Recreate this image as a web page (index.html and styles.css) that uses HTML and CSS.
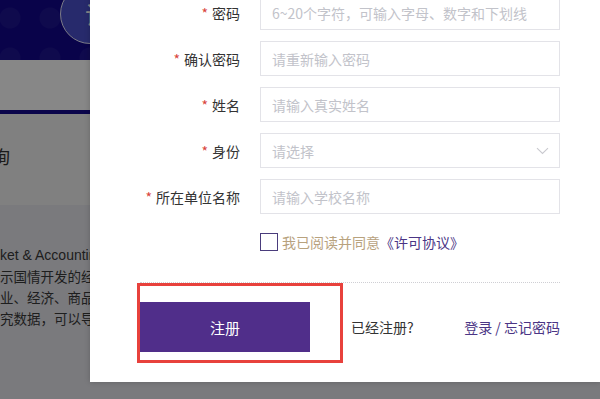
FILE: index.html
```html
<!DOCTYPE html>
<html lang="zh-CN">
<head>
<meta charset="utf-8">
<title>注册</title>
<link rel="stylesheet" href="styles.css">
</head>
<body>
<div class="page">
  <header class="hero">
    <div class="hero-btn">试</div>
  </header>
  <div class="band"></div>
  <div class="navline"></div>
  <section class="title-row"><h2 class="title">数据查询</h2></section>
  <section class="intro">
    <p class="line">ket &amp; Accounting Research Database</p>
    <p class="line">示国情开发的经济金融研究数据库</p>
    <p class="line">业、经济、商品、市场等领域的研究</p>
    <p class="line">究数据，可以导出下载使用</p>
  </section>
</div>
<div class="mask"></div>
<div class="modal">
  <form class="form">
    <div class="row">
      <label class="label"><span class="req">*</span>密码</label>
      <input class="field" type="password" placeholder="6~20个字符，可输入字母、数字和下划线">
    </div>
    <div class="row">
      <label class="label"><span class="req">*</span>确认密码</label>
      <input class="field" type="password" placeholder="请重新输入密码">
    </div>
    <div class="row">
      <label class="label"><span class="req">*</span>姓名</label>
      <input class="field" type="text" placeholder="请输入真实姓名">
    </div>
    <div class="row">
      <label class="label"><span class="req">*</span>身份</label>
      <div class="field select">
        <span class="ph">请选择</span>
        <svg class="chev" width="13" height="8" viewBox="0 0 13 8"><path d="M1 1.2 L6.5 6.5 L12 1.2" fill="none" stroke="#c9c9cf" stroke-width="1.1"/></svg>
      </div>
    </div>
    <div class="row">
      <label class="label"><span class="req">*</span>所在单位名称</label>
      <input class="field" type="text" placeholder="请输入学校名称">
    </div>
    <div class="agree">
      <span class="box"></span>
      <span class="agree-text">我已阅读并同意</span><a class="agree-link">《许可协议》</a>
    </div>
    <div class="footer">
      <button class="submit" type="button">注册</button>
      <span class="have">已经注册?</span>
      <span class="links"><a class="lk">登录</a> / <a class="lk">忘记密码</a></span>
      <div class="highlight"></div>
    </div>
  </form>
</div>
</body>
</html>
```

FILE: styles.css
```css
* { box-sizing: border-box; }
html, body {
  margin: 0;
  padding: 0;
  width: 600px;
  height: 399px;
  overflow: hidden;
  font-family: "Noto Sans CJK SC", "Liberation Sans", sans-serif;
}
body { position: relative; background: #e4e4ea; }

.page { width: 600px; }
.hero {
  height: 60px;
  background-color: #12078c;
  background-image: radial-gradient(circle, rgba(255,255,255,0.05) 10px, transparent 11px);
  background-size: 40px 40px;
  background-position: -10px -2px;
  display: flex;
  padding-left: 60px;
}
.hero-btn {
  width: 60px;
  height: 60px;
  margin-top: -16px;
  border-radius: 50%;
  background: #4b50cc;
  border: 1.5px solid #e8e8ff;
  color: #ffffff;
  font-size: 24px;
  line-height: 58px;
  padding-left: 24px;
  white-space: nowrap;
  overflow: hidden;
}
.band { height: 50px; background: #ffffff; }
.navline { height: 4px; background: #150a8e; }
.title-row {
  height: 91px;
  background: #f2f2f2;
  display: flex;
  align-items: center;
}
.title {
  margin: 0 0 8px -62px;
  font-size: 18px;
  font-weight: normal;
  color: #333;
  white-space: nowrap;
}
.intro {
  height: 200px;
  background: #e6e6ec;
  padding-top: 40px;
}
.line {
  margin: 0;
  font-size: 14px;
  line-height: 21px;
  color: #3a3a3a;
  white-space: nowrap;
  font-family: "Liberation Sans", "Noto Sans CJK SC", sans-serif;
}
.line:not(:first-child) {
  font-family: "Noto Sans CJK SC", sans-serif;
  font-size: 13.5px;
}

.mask {
  position: absolute;
  inset: 0;
  background: rgba(0, 0, 0, 0.47);
}

.modal {
  position: absolute;
  left: 90px;
  right: 0;
  top: -45px;
  bottom: 17px;
  background: #ffffff;
  box-shadow: 0 0 6px rgba(0,0,0,0.2);
  padding-top: 40px;
}
.form {
  display: flex;
  flex-direction: column;
}
.row {
  display: grid;
  grid-template-columns: 150px 300px;
  column-gap: 20px;
  align-items: center;
  height: 35px;
  margin-bottom: 11px;
}
.label {
  text-align: right;
  font-size: 14px;
  color: #333;
  white-space: nowrap;
}
.req {
  color: #d9453b;
  margin-right: 4px;
}
.field {
  width: 300px;
  height: 35px;
  border: 1px solid #e3e3e8;
  border-radius: 0;
  padding: 0 11px;
  font-family: "Noto Sans CJK SC", sans-serif;
  font-size: 14px;
  color: #333;
  outline: none;
  background: #fff;
}
.field::placeholder { color: #c2c3ca; }
.select {
  display: flex;
  align-items: center;
  justify-content: space-between;
  padding-right: 10px;
}
.ph { color: #c2c3ca; font-size: 14px; }

.agree {
  margin: 8px 0 0 170px;
  display: flex;
  align-items: center;
  height: 18px;
  font-size: 14px;
}
.box {
  width: 18px;
  height: 18px;
  border: 1.5px solid #4a3c7c;
  margin-right: 4px;
}
.agree-text { color: #b8a27e; }
.agree-link { color: #4b3585; }

.footer {
  position: relative;
  margin: 31px 0 0 50px;
  width: 420px;
  border-top: 1px dotted #cfcfd4;
  padding: 19px 0 30px;
  display: flex;
  align-items: center;
}
.submit {
  width: 170px;
  height: 50px;
  border: 0;
  background: #502e8a;
  color: #ffffff;
  font-family: "Noto Sans CJK SC", sans-serif;
  font-size: 15px;
  padding: 0;
}
.have {
  margin-left: 41px;
  font-size: 14px;
  color: #333;
}
.links {
  margin-left: auto;
  font-size: 14px;
  color: #4b3585;
}
.lk { color: #4b3585; }
.highlight {
  position: absolute;
  left: -3px;
  top: 0;
  width: 206px;
  height: 80px;
  border: 3px solid #e8413c;
}
```
